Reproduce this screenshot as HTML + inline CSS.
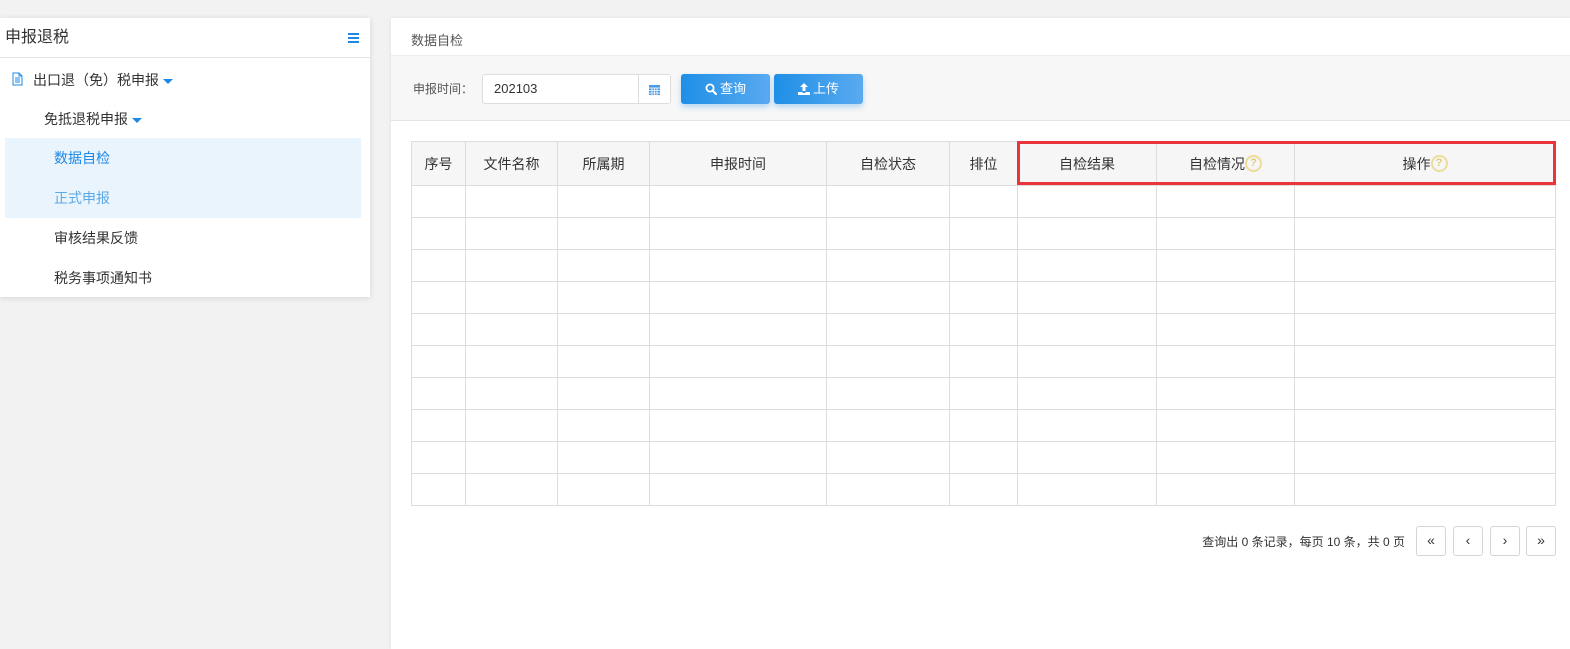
<!DOCTYPE html>
<html><head><meta charset="utf-8"><style>
*{margin:0;padding:0;box-sizing:border-box}
body{width:1570px;height:649px;background:#f2f2f2;font-family:"Liberation Sans","Noto Sans CJK SC",sans-serif;color:#333;position:relative;overflow:hidden;font-size:13px}
.abs{position:absolute}
.lp{left:0;top:18px;width:370px;height:279px;background:#fff;box-shadow:0 1px 6px rgba(0,0,0,.12)}
.lp .hd{height:40px;border-bottom:1px solid #e5e5e5;font-size:16px;line-height:40px;padding-left:5px;color:#333}
.mi{position:absolute;font-size:14px;color:#333;line-height:20px}
.caret{display:inline-block;width:0;height:0;border-left:5px solid transparent;border-right:5px solid transparent;border-top:5px solid #1e88e5;vertical-align:middle;margin-left:4px}
.rp{left:391px;top:18px;width:1179px;height:631px;background:#fff;box-shadow:0 0 4px rgba(0,0,0,.08)}
.tb{position:absolute;left:0;top:37px;width:100%;height:66px;background:#f7f7f7;border-top:1px solid #ececec;border-bottom:1px solid #e5e5e5}
.btn{position:absolute;top:56px;height:30px;border-radius:3px;background:linear-gradient(90deg,#1e8fe6,#5aaaf0);color:#fff;font-size:13px;line-height:30px;text-align:center;box-shadow:0 3px 6px rgba(30,140,230,.3)}
.btn svg{vertical-align:-2px;margin-right:3px}
table{position:absolute;left:411px;top:141px;border-collapse:collapse;table-layout:fixed}
td,th{border:1px solid #ddd;height:32px}
th{height:44px;background:#f6f6f6;font-weight:normal;font-size:14px;color:#333}
.q{display:inline-block;width:17px;height:17px;border:2px solid #eedc9a;border-radius:50%;color:#e3cc70;font-size:11px;line-height:13px;text-align:center;vertical-align:middle;font-weight:bold;margin-top:-3px}
.pg{position:absolute;top:526px;width:30px;height:30px;border:1px solid #d5d5d5;border-radius:3px;background:#fff;text-align:center;line-height:27px;font-size:14px;color:#333}
</style></head><body>
<div class="abs lp">
<div class="hd">申报退税</div>
<div class="abs" style="left:348px;top:15px;width:11px;height:2px;background:#1e88e5;box-shadow:0 4px 0 #1e88e5,0 8px 0 #1e88e5"></div>
<svg class="abs" style="left:12px;top:54px" width="11" height="14" viewBox="0 0 11 14"><path d="M1 1h6l3 3v9H1z M7 1v3h3 M3 6h5M3 8h5M3 10h5" fill="none" stroke="#1e88e5" stroke-width="1"/></svg>
<div class="mi" style="left:33px;top:52px">出口退（免）税申报<span class="caret"></span></div>
<div class="mi" style="left:44px;top:91px">免抵退税申报<span class="caret"></span></div>
<div class="abs" style="left:5px;top:120px;width:356px;height:80px;background:#e9f4fc"></div>
<div class="mi" style="left:54px;top:130px;color:#1e88e5">数据自检</div>
<div class="mi" style="left:54px;top:170px;color:#5aa9e8">正式申报</div>
<div class="mi" style="left:54px;top:210px">审核结果反馈</div>
<div class="mi" style="left:54px;top:250px">税务事项通知书</div>
</div>
<div class="abs rp">
<div class="abs" style="left:20px;top:12px;font-size:13px;color:#555">数据自检</div>
<div class="tb"></div>
<div class="abs" style="left:22px;top:62px;color:#555;font-size:12px">申报时间：</div>
<div class="abs" style="left:91px;top:56px;width:189px;height:30px;border:1px solid #ddd;border-radius:3px;background:#fff;line-height:28px;padding-left:11px;font-size:13px">202103
<div class="abs" style="left:155px;top:0;width:32px;height:28px;border-left:1px solid #ddd"></div>
<svg class="abs" style="left:166px;top:9px" width="11" height="11" viewBox="0 0 11 11"><rect x="0" y="1" width="11" height="10" fill="#4a9de8"/><path d="M0 4h11M0 6.5h11M0 9h11M3 4v7M5.5 4v7M8 4v7" stroke="#fff" stroke-width=".8"/></svg></div>
<div class="btn" style="left:290px;width:89px"><svg width="12" height="12" viewBox="0 0 12 12"><circle cx="5" cy="5" r="3.6" fill="none" stroke="#fff" stroke-width="1.8"/><path d="M7.6 7.6L11 11" stroke="#fff" stroke-width="2.2" stroke-linecap="round"/></svg>查询</div>
<div class="btn" style="left:383px;width:89px"><svg width="12" height="12" viewBox="0 0 12 12"><path d="M6 0L10 4H7.5V8h-3V4H2z" fill="#fff"/><path d="M0 9h4.5v1h3V9H12v3H0z" fill="#fff"/></svg>上传</div>
</div>
<table>
<colgroup><col width="54"><col width="92"><col width="92"><col width="177"><col width="123"><col width="68"><col width="139"><col width="138"><col width="261"></colgroup>
<tr><th>序号</th><th>文件名称</th><th>所属期</th><th>申报时间</th><th>自检状态</th><th>排位</th><th>自检结果</th><th>自检情况<span class="q">?</span></th><th>操作<span class="q">?</span></th></tr>
<tr><td></td><td></td><td></td><td></td><td></td><td></td><td></td><td></td><td></td></tr>
<tr><td></td><td></td><td></td><td></td><td></td><td></td><td></td><td></td><td></td></tr>
<tr><td></td><td></td><td></td><td></td><td></td><td></td><td></td><td></td><td></td></tr>
<tr><td></td><td></td><td></td><td></td><td></td><td></td><td></td><td></td><td></td></tr>
<tr><td></td><td></td><td></td><td></td><td></td><td></td><td></td><td></td><td></td></tr>
<tr><td></td><td></td><td></td><td></td><td></td><td></td><td></td><td></td><td></td></tr>
<tr><td></td><td></td><td></td><td></td><td></td><td></td><td></td><td></td><td></td></tr>
<tr><td></td><td></td><td></td><td></td><td></td><td></td><td></td><td></td><td></td></tr>
<tr><td></td><td></td><td></td><td></td><td></td><td></td><td></td><td></td><td></td></tr>
<tr><td></td><td></td><td></td><td></td><td></td><td></td><td></td><td></td><td></td></tr>
</table>
<div class="abs" style="left:1017px;top:141px;width:539px;height:44px;border:3px solid #e8343a"></div>
<div class="abs" style="right:165px;top:533px;font-size:12px;color:#333;white-space:nowrap">查询出 0 条记录，每页 10 条，共 0 页</div>
<div class="pg" style="left:1416px">«</div>
<div class="pg" style="left:1453px">‹</div>
<div class="pg" style="left:1490px">›</div>
<div class="pg" style="left:1526px">»</div>
</body></html>
